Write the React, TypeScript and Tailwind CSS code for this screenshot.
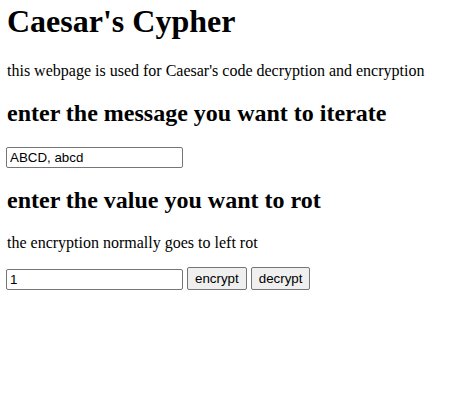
import { useState } from 'react'

export default function App() {
  const [message, setMessage] = useState('ABCD, abcd')
  const [rot, setRot] = useState('1')

  return (
    <div className="min-h-[401px] bg-white px-[6px] pt-[3px] text-black font-['Liberation_Serif','Times_New_Roman',serif]">
      <h1 className="pl-px text-[32px] font-bold leading-[37px]">Caesar's Cypher</h1>
      <p className="mt-[22px] pl-px text-[16px] leading-[18px]">this webpage is used for Caesar's code decryption and encryption</p>
      <h2 className="mt-[19px] pl-px text-[24px] font-bold leading-[28px]">enter the message you want to iterate</h2>
      <div className="mt-[20px] flex">
        <input
          className="h-[21px] w-[177px] rounded-[2px] border border-[#767676] bg-white pl-[3px] text-[13.33px] leading-[15px] text-black outline-none font-['Liberation_Sans',Arial,sans-serif]"
          value={message}
          onChange={(e) => setMessage(e.target.value)}
        />
      </div>
      <h2 className="mt-[18px] pl-px text-[24px] font-bold leading-[28px]">enter the value you want to rot</h2>
      <p className="mt-[20px] pl-px text-[16px] leading-[18px]">the encryption normally goes to left rot</p>
      <div className="mt-[15px] flex items-start gap-[4px] font-['Liberation_Sans',Arial,sans-serif]">
        <input
          className="mt-[2px] h-[21px] w-[177px] rounded-[2px] border border-[#767676] bg-white pl-[3px] text-[13.33px] leading-[15px] text-black outline-none"
          value={rot}
          onChange={(e) => setRot(e.target.value)}
        />
        <button className="h-[23px] rounded-[2px] border border-[#767676] bg-[#efefef] px-[7px] text-[13.33px] leading-[15px] text-black">encrypt</button>
        <button className="h-[23px] rounded-[2px] border border-[#767676] bg-[#efefef] px-[7px] text-[13.33px] leading-[15px] text-black">decrypt</button>
      </div>
    </div>
  )
}
